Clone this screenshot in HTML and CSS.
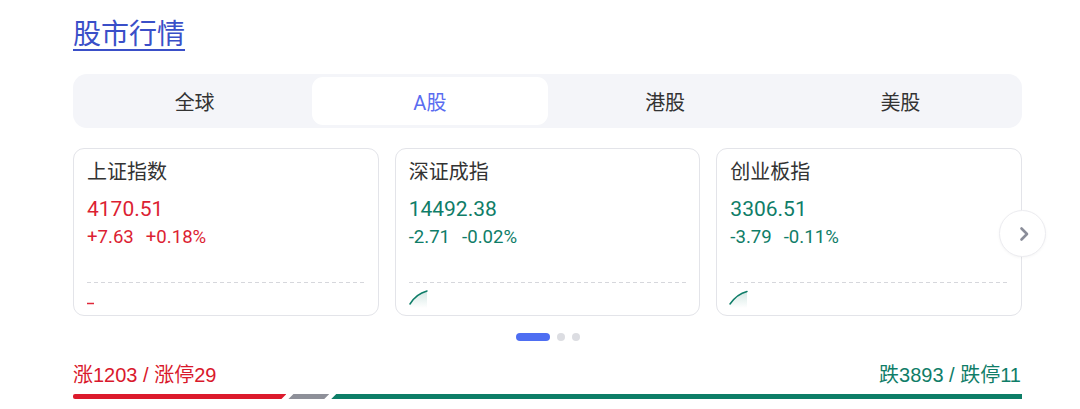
FILE: index.html
```html
<!DOCTYPE html>
<html lang="zh-CN">
<head>
<meta charset="utf-8">
<title>股市行情</title>
<link rel="stylesheet" href="styles.css">
</head>
<body>
<main class="page">
  <h1 class="title"><a href="#">股市行情</a></h1>

  <nav class="tabs">
    <div class="tab">全球</div>
    <div class="tab active">A股</div>
    <div class="tab">港股</div>
    <div class="tab">美股</div>
  </nav>

  <section class="cards-wrap">
    <div class="cards">
      <div class="card up">
        <div class="card-name">上证指数</div>
        <div class="card-price">4170.51</div>
        <div class="card-change"><span class="chg">+7.63</span><span>+0.18%</span></div>
        <div class="chart">
          <svg width="60" height="25" viewBox="0 0 60 25">
            <line x1="13" y1="20.5" x2="20" y2="20.5" stroke="#e0283a" stroke-width="1.5"/>
          </svg>
        </div>
      </div>
      <div class="card down">
        <div class="card-name">深证成指</div>
        <div class="card-price">14492.38</div>
        <div class="card-change"><span class="chg">-2.71</span><span>-0.02%</span></div>
        <div class="chart">
          <svg width="60" height="25" viewBox="0 0 60 25">
            <defs>
              <linearGradient id="g1" x1="0" y1="0" x2="0" y2="1">
                <stop offset="0" stop-color="#0f7d68" stop-opacity="0.18"/>
                <stop offset="1" stop-color="#0f7d68" stop-opacity="0"/>
              </linearGradient>
            </defs>
            <path d="M14 21 Q20 11 31 8 L31 25 L14 25 Z" fill="url(#g1)"/>
            <path d="M14 21 Q20 11 31 8" fill="none" stroke="#0f7d68" stroke-width="1.5" stroke-linecap="round"/>
          </svg>
        </div>
      </div>
      <div class="card down">
        <div class="card-name">创业板指</div>
        <div class="card-price">3306.51</div>
        <div class="card-change"><span class="chg">-3.79</span><span>-0.11%</span></div>
        <div class="chart">
          <svg width="60" height="25" viewBox="0 0 60 25">
            <defs>
              <linearGradient id="g2" x1="0" y1="0" x2="0" y2="1">
                <stop offset="0" stop-color="#0f7d68" stop-opacity="0.18"/>
                <stop offset="1" stop-color="#0f7d68" stop-opacity="0"/>
              </linearGradient>
            </defs>
            <path d="M13 21 Q20 11 30 8.5 L30 25 L13 25 Z" fill="url(#g2)"/>
            <path d="M13 21 Q20 11 30 8.5" fill="none" stroke="#0f7d68" stroke-width="1.5" stroke-linecap="round"/>
          </svg>
        </div>
      </div>
    </div>
    <button class="next" aria-label="下一页">
      <svg width="12" height="16" viewBox="0 0 12 16">
        <path d="M3.5 2.5 L9 8 L3.5 13.5" fill="none" stroke="#8a8d99" stroke-width="2.6" stroke-linecap="round" stroke-linejoin="round"/>
      </svg>
    </button>
  </section>

  <div class="dots">
    <span class="dot current"></span>
    <span class="dot"></span>
    <span class="dot"></span>
  </div>

  <section class="breadth">
    <div class="breadth-text">
      <span class="rise">涨1203 / 涨停29</span>
      <span class="fall">跌3893 / 跌停11</span>
    </div>
    <div class="bar">
      <span class="seg seg-up" style="flex-grow:1203"></span>
      <span class="seg seg-flat" style="flex-grow:230"></span>
      <span class="seg seg-down" style="flex-grow:3893"></span>
    </div>
  </section>
</main>
</body>
</html>
```
FILE: styles.css
```css
* { box-sizing: border-box; }

html, body {
  margin: 0;
  padding: 0;
  background: #ffffff;
}

body {
  font-family: Roboto, "Noto Sans CJK SC", sans-serif;
  color: #333333;
}

.page {
  width: 949px;
  margin-left: 73px;
  padding-top: 17px;
}

.title {
  margin: 0;
  font-size: 28px;
  line-height: 36px;
  font-weight: 400;
}

.title a {
  color: #3a4fc8;
  text-decoration: underline;
  text-decoration-thickness: 1.5px;
  text-underline-offset: 5px;
}

.tabs {
  margin-top: 21px;
  height: 54px;
  padding: 3px 4px;
  background: #f4f5f9;
  border-radius: 14px;
  display: grid;
  grid-template-columns: repeat(4, 1fr);
}

.tab {
  display: flex;
  align-items: center;
  justify-content: center;
  font-size: 20px;
  color: #333333;
  border-radius: 11px;
}

.tab.active {
  background: #ffffff;
  color: #5a6cf0;
}

.cards-wrap {
  position: relative;
  margin-top: 20px;
}

.cards {
  display: grid;
  grid-template-columns: repeat(3, 1fr);
  gap: 16px;
}

.card {
  height: 168px;
  border: 1px solid #e3e4e9;
  border-radius: 11px;
  padding: 9px 12px 0 13px;
  display: flex;
  flex-direction: column;
  background: #ffffff;
}

.card-name {
  font-size: 20px;
  line-height: 28px;
  color: #333333;
}

.card-price {
  margin-top: 9px;
  font-size: 21px;
  line-height: 28px;
}

.card-change {
  font-size: 18.6px;
  line-height: 28px;
}

.chg { margin-right: 12px; }

.card.up .card-price,
.card.up .card-change { color: #dc1f33; }

.card.down .card-price,
.card.down .card-change { color: #0f7d68; }

.chart {
  margin-top: auto;
  margin-bottom: 7px;
  height: 26px;
  padding-top: 1px;
  background-image: repeating-linear-gradient(90deg, #d6d7dc 0 4px, transparent 4px 7px);
  background-size: 100% 1px;
  background-repeat: no-repeat;
  background-position: 0 0;
}

.chart svg {
  display: block;
  margin-left: -13px;
}

.next {
  position: absolute;
  right: -24px;
  top: 62px;
  width: 47px;
  height: 47px;
  padding: 0;
  border-radius: 50%;
  border: 1px solid #ececf0;
  background: #ffffff;
  box-shadow: 0 1px 3px rgba(0, 0, 0, 0.04);
  display: flex;
  align-items: center;
  justify-content: center;
}

.next svg { margin-left: 2px; }

.dots {
  margin-top: 17px;
  display: flex;
  justify-content: center;
  gap: 7px;
  height: 8px;
}

.dot {
  width: 8px;
  height: 8px;
  border-radius: 4px;
  background: #dcdde2;
}

.dot.current {
  width: 34px;
  background: #4e6ef2;
}

.breadth { margin-top: 20px; }

.breadth-text {
  display: flex;
  justify-content: space-between;
  font-family: "Liberation Sans", "Noto Sans CJK SC", sans-serif;
  font-size: 20px;
  line-height: 28px;
}

.rise { color: #d9192c; }
.fall { color: #0f7d68; padding-right: 1px; }

.bar {
  margin-top: 5px;
  height: 5px;
  display: flex;
  gap: 2px;
}

.seg { display: block; height: 100%; flex-basis: 0; }

.seg-up {
  background: #dc1a2c;
  border-radius: 2px 0 0 2px;
  clip-path: polygon(0 0, 100% 0, calc(100% - 5px) 100%, 0 100%);
}

.seg-flat {
  background: #8e9099;
  clip-path: polygon(5px 0, 100% 0, calc(100% - 5px) 100%, 0 100%);
}

.seg-down {
  background: #0d7e67;
  clip-path: polygon(5px 0, 100% 0, 100% 100%, 0 100%);
}
```
